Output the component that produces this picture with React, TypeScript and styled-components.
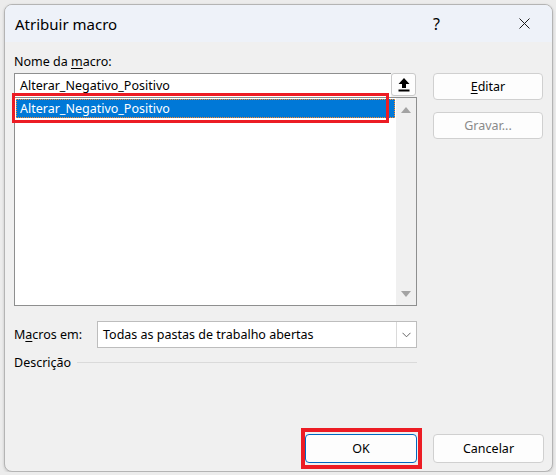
import React from "react";
import styled, { createGlobalStyle } from "styled-components";

const GlobalStyle = createGlobalStyle`
  body {
    margin: 0;
    background: #ececec;
    font-family: "Noto Sans", "Open Sans", sans-serif;
    font-size: 12.5px;
    color: #000;
  }
`;

const Dialog = styled.div`
  margin: 4px 0 0 4px;
  width: 549px;
  height: 468px;
  box-sizing: border-box;
  border: 1px solid #b4b4b4;
  border-radius: 8px;
  background: #f0f0f0;
  overflow: hidden;
  display: flex;
  flex-direction: column;
  box-shadow: 0 1px 3px rgba(0, 0, 0, 0.18);
`;

const TitleBar = styled.div`
  height: 37px;
  flex-shrink: 0;
  background: #eef2f9;
  display: flex;
  align-items: center;
  padding: 0 22px 0 10px;
`;

const Title = styled.span`
  flex: 1;
  font-size: 15px;
  padding-top: 1px;
`;

const HelpGlyph = styled.span`
  font-size: 16px;
  margin-right: 79px;
  padding-top: 1px;
`;

const Body = styled.div`
  flex: 1;
  display: flex;
  flex-direction: column;
  padding: 12px 9px 8px 9px;
`;

const Columns = styled.div`
  display: grid;
  grid-template-columns: 403px 110px;
  column-gap: 16px;
`;

const LeftColumn = styled.div`
  display: flex;
  flex-direction: column;
`;

const RightColumn = styled.div`
  display: flex;
  flex-direction: column;
  gap: 12px;
  padding-top: 19px;
`;

const Label = styled.div`
  height: 16px;
  line-height: 16px;
  margin-bottom: 3px;
`;

const FieldRow = styled.div`
  display: flex;
  height: 24px;
`;

const FieldInput = styled.div`
  width: 377px;
  box-sizing: border-box;
  border: 1px solid #8e8f8f;
  border-bottom: none;
  border-right: none;
  background: #fff;
  padding-left: 5px;
  line-height: 23px;
`;

const UpButton = styled.div`
  width: 25px;
  height: 23px;
  box-sizing: border-box;
  border: 1px solid #c9c9c9;
  border-radius: 3px;
  background: #fdfdfd;
  display: flex;
  align-items: center;
  justify-content: center;
`;

const ListBox = styled.div`
  position: relative;
  height: 209px;
  box-sizing: border-box;
  border: 1px solid #8e8f8f;
  background: #fff;
  display: flex;
`;

const Items = styled.div`
  flex: 1;
  padding: 1px 1px 0 1px;
`;

const Item = styled.div<{ $selected?: boolean }>`
  height: 19px;
  box-sizing: border-box;
  line-height: 18px;
  padding-left: 3px;
  background: ${(p) => (p.$selected ? "#0078d7" : "transparent")};
  color: ${(p) => (p.$selected ? "#fff" : "#000")};
  border: 1px dotted ${(p) => (p.$selected ? "#ff8a28" : "transparent")};
`;

const ScrollBar = styled.div`
  width: 20px;
  background: #f0f0f0;
  display: flex;
  flex-direction: column;
  justify-content: space-between;
  align-items: center;
  padding: 9px 0 8px;
`;

/* red annotation frames drawn over the dialog */
const ItemHighlight = styled.span`
  position: absolute;
  left: -3px;
  top: -5px;
  width: 377px;
  height: 30px;
  box-sizing: border-box;
  border: 3px solid #ec1c24;
  pointer-events: none;
`;

const ButtonHighlight = styled.span`
  position: absolute;
  left: -5px;
  top: -7px;
  right: -6px;
  bottom: -7px;
  border: 4px solid #ec1c24;
  pointer-events: none;
`;

const MacrosRow = styled.div`
  display: flex;
  align-items: center;
  margin-top: 15px;
  height: 27px;
`;

const MacrosLabel = styled.span`
  width: 83px;
`;

const Combo = styled.div`
  flex: 1;
  height: 27px;
  box-sizing: border-box;
  border: 1px solid #bdbdbd;
  background: #fff;
  display: flex;
`;

const ComboText = styled.span`
  flex: 1;
  padding-left: 5px;
  line-height: 25px;
`;

const ComboArrow = styled.span`
  width: 19px;
  border-left: 1px solid #dadada;
  display: flex;
  align-items: center;
  justify-content: center;
`;

const DescriptionRow = styled.div`
  display: flex;
  align-items: center;
  margin-top: 6px;
  height: 16px;
`;

const Rule = styled.span`
  flex: 1;
  margin-left: 6px;
  border-top: 1px solid #dadada;
`;

const Footer = styled.div`
  margin-top: auto;
  display: grid;
  grid-template-columns: 403px 111px;
  column-gap: 16px;
`;

const Button = styled.div<{ $primary?: boolean; $disabled?: boolean }>`
  position: relative;
  height: 27px;
  box-sizing: border-box;
  border: 1px solid ${(p) => (p.$primary ? "#0067c0" : "#d0d0d0")};
  border-radius: 4px;
  background: #fdfdfd;
  color: ${(p) => (p.$disabled ? "#8a8a8a" : "#000")};
  display: flex;
  align-items: center;
  justify-content: center;
`;

const FooterButton = styled(Button)<{ $width?: number }>`
  height: 29px;
  width: ${(p) => (p.$width ? `${p.$width}px` : "auto")};
  justify-self: end;
  ${(p) => (p.$width ? "" : "justify-self: stretch;")}
`;

const Mnemonic = styled.span`
  text-decoration: underline;
  text-underline-offset: 2px;
`;

const CloseIcon = () => (
  <svg width="11" height="11" viewBox="0 0 11 11">
    <path d="M0.5 0.5 L10.5 10.5 M10.5 0.5 L0.5 10.5" stroke="#1a1a1a" strokeWidth="1" />
  </svg>
);

const UploadIcon = () => (
  <svg width="12" height="14" viewBox="0 0 12 14">
    <path d="M6 0 L11.5 6 H8 V10 H4 V6 H0.5 Z" fill="#000" />
    <rect x="0.5" y="11.5" width="11" height="2" fill="#000" />
  </svg>
);

const Triangle = ({ down }: { down?: boolean }) => (
  <svg width="10" height="6" viewBox="0 0 10 6">
    <path d={down ? "M0 0 H10 L5 6 Z" : "M0 6 H10 L5 0 Z"} fill="#a3a3a3" />
  </svg>
);

const ChevronDown = () => (
  <svg width="9" height="6" viewBox="0 0 9 6">
    <path d="M0.5 0.8 L4.5 4.8 L8.5 0.8" fill="none" stroke="#555" strokeWidth="0.9" />
  </svg>
);

const macroName = "Alterar_Negativo_Positivo";

export default function App() {
  return (
    <>
      <GlobalStyle />
      <Dialog>
        <TitleBar>
          <Title>Atribuir macro</Title>
          <HelpGlyph>?</HelpGlyph>
          <CloseIcon />
        </TitleBar>
        <Body>
          <Columns>
            <LeftColumn>
              <Label>
                Nome da <Mnemonic>m</Mnemonic>acro:
              </Label>
              <FieldRow>
                <FieldInput>{macroName}</FieldInput>
                <UpButton>
                  <UploadIcon />
                </UpButton>
              </FieldRow>
              <ListBox>
                <Items>
                  <Item $selected>{macroName}</Item>
                </Items>
                <ScrollBar>
                  <Triangle />
                  <Triangle down />
                </ScrollBar>
                <ItemHighlight />
              </ListBox>
              <MacrosRow>
                <MacrosLabel>
                  M<Mnemonic>a</Mnemonic>cros em:
                </MacrosLabel>
                <Combo>
                  <ComboText>Todas as pastas de trabalho abertas</ComboText>
                  <ComboArrow>
                    <ChevronDown />
                  </ComboArrow>
                </Combo>
              </MacrosRow>
              <DescriptionRow>
                Descrição
                <Rule />
              </DescriptionRow>
            </LeftColumn>
            <RightColumn>
              <Button>
                <Mnemonic>E</Mnemonic>ditar
              </Button>
              <Button $disabled>Gravar...</Button>
            </RightColumn>
          </Columns>
          <Footer>
            <FooterButton $primary $width={112}>
              OK
              <ButtonHighlight />
            </FooterButton>
            <FooterButton>Cancelar</FooterButton>
          </Footer>
        </Body>
      </Dialog>
    </>
  );
}
